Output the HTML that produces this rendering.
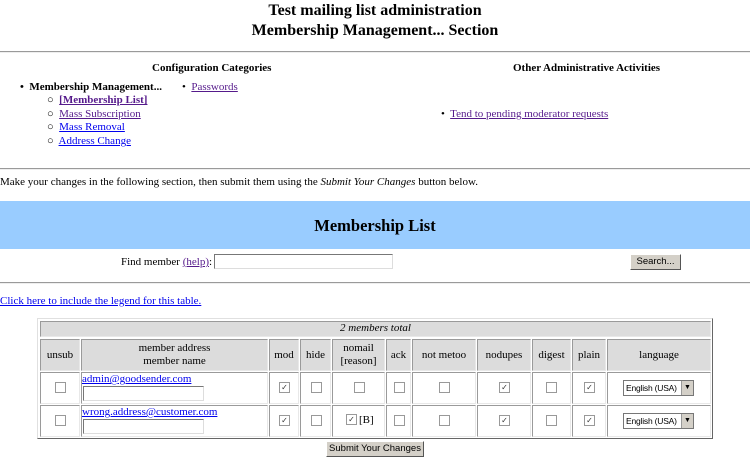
<!DOCTYPE html>
<html><head><meta charset="utf-8"><style>
body{margin:0;width:750px;height:462px;background:#fff;font-family:"Liberation Serif",serif;font-size:11px;color:#000;position:relative;overflow:hidden}
.a{position:absolute;white-space:nowrap}
a{color:#00e;text-decoration:underline}
a.v{color:#551a8b}
.hr{position:absolute;left:0;width:750px;height:0;border-top:1px solid #9a9a9a;border-bottom:1px solid #eee}
.c{position:absolute;box-sizing:border-box;border:1px solid;border-color:#9a9a9a #e8e8e8 #e8e8e8 #9a9a9a;text-align:center;line-height:13px}
.h{background:#dcdcdc}
.cb{display:inline-block;width:9px;height:9px;border:1px solid #999;background:#fff;position:absolute;font-size:8px;line-height:9px;text-align:center;font-family:"DejaVu Sans",sans-serif;color:#333}
.in{position:absolute;box-sizing:border-box;border:1px solid;border-color:#777 #ddd #ddd #777;background:#fff}
.btn{position:absolute;box-sizing:border-box;background:#d4d0c8;border:1px solid;border-color:#fff #555 #555 #fff;font-family:"Liberation Sans",sans-serif;font-size:9.5px;text-align:center;white-space:nowrap}
.sel{position:absolute;box-sizing:border-box;border:1px solid #777;background:#fff;font-family:"Liberation Sans",sans-serif;font-size:8.5px;letter-spacing:-0.2px;line-height:14px;padding-left:2px;width:71px;height:16px;white-space:nowrap;overflow:hidden}
.sel i{position:absolute;right:0;top:0;width:11px;height:14px;background:#d4d0c8;border-left:1px solid #999;font-style:normal;font-size:7px;text-align:center;letter-spacing:0}
</style></head><body>
<div class="a" style="left:0;width:750px;text-align:center;top:1px;font-size:16px;font-weight:bold;line-height:20px">Test mailing list administration<br>Membership Management... Section</div>
<div class="hr" style="top:51px"></div>
<div class="a" style="left:152px;top:62px;font-weight:bold">Configuration Categories</div>
<div class="a" style="left:513px;top:62px;font-weight:bold">Other Administrative Activities</div>
<div class="a" style="left:20px;top:81px;font-weight:bold">•&nbsp; Membership Management...</div>
<div class="a" style="left:182px;top:81px">•&nbsp; <a class="v">Passwords</a></div>
<div class="a" style="left:47px;top:94px">○&nbsp; <a class="v" style="font-weight:bold">[Membership List]</a></div>
<div class="a" style="left:47px;top:108px">○&nbsp; <a class="v">Mass Subscription</a></div>
<div class="a" style="left:47px;top:121px">○&nbsp; <a>Mass Removal</a></div>
<div class="a" style="left:47px;top:135px">○&nbsp; <a>Address Change</a></div>
<div class="a" style="left:441px;top:108px">•&nbsp; <a class="v">Tend to pending moderator requests</a></div>
<div class="hr" style="top:168px"></div>
<div class="a" style="left:0;top:176px">Make your changes in the following section, then submit them using the <i>Submit Your Changes</i> button below.</div>
<div class="a" style="left:0;top:201px;width:750px;height:48px;background:#99ccff"></div>
<div class="a" style="left:0;top:216px;width:750px;text-align:center;font-size:16.5px;font-weight:bold">Membership List</div>
<div class="a" style="left:121px;top:256px">Find member <a class="v">(help)</a>:</div>
<div class="in" style="left:214px;top:254px;width:179px;height:15px"></div>
<div class="btn" style="left:630px;top:254px;width:51px;height:16px;line-height:14px">Search...</div>
<div class="hr" style="top:282px"></div>
<div class="a" style="left:0;top:295px"><a>Click here to include the legend for this table.</a></div>

<div class="a" style="left:37px;top:318px;width:676px;height:121px;box-sizing:border-box;border:1px solid;border-color:#e0e0e0 #666 #666 #e0e0e0"></div>
<div class="c h" style="left:40px;top:321px;width:671px;height:16px;text-align:center"><i>2 members total</i></div>

<div class="c h" style="left:40px;top:339px;width:40px;height:32px;line-height:30px">unsub</div>
<div class="c h" style="left:81px;top:339px;width:187px;height:32px;padding-top:2px">member address<br>member name</div>
<div class="c h" style="left:269px;top:339px;width:30px;height:32px;line-height:30px">mod</div>
<div class="c h" style="left:300px;top:339px;width:31px;height:32px;line-height:30px">hide</div>
<div class="c h" style="left:332px;top:339px;width:53px;height:32px;padding-top:2px">nomail<br>[reason]</div>
<div class="c h" style="left:386px;top:339px;width:25px;height:32px;line-height:30px">ack</div>
<div class="c h" style="left:412px;top:339px;width:64px;height:32px;line-height:30px">not metoo</div>
<div class="c h" style="left:477px;top:339px;width:54px;height:32px;line-height:30px">nodupes</div>
<div class="c h" style="left:532px;top:339px;width:39px;height:32px;line-height:30px">digest</div>
<div class="c h" style="left:572px;top:339px;width:34px;height:32px;line-height:30px">plain</div>
<div class="c h" style="left:607px;top:339px;width:104px;height:32px;line-height:30px">language</div>

<div class="c" style="left:40px;top:372px;width:40px;height:32px"></div>
<div class="c" style="left:81px;top:372px;width:187px;height:32px"></div>
<div class="c" style="left:269px;top:372px;width:30px;height:32px"></div>
<div class="c" style="left:300px;top:372px;width:31px;height:32px"></div>
<div class="c" style="left:332px;top:372px;width:53px;height:32px"></div>
<div class="c" style="left:386px;top:372px;width:25px;height:32px"></div>
<div class="c" style="left:412px;top:372px;width:64px;height:32px"></div>
<div class="c" style="left:477px;top:372px;width:54px;height:32px"></div>
<div class="c" style="left:532px;top:372px;width:39px;height:32px"></div>
<div class="c" style="left:572px;top:372px;width:34px;height:32px"></div>
<div class="c" style="left:607px;top:372px;width:104px;height:32px"></div>
<div class="c" style="left:40px;top:405px;width:40px;height:32px"></div>
<div class="c" style="left:81px;top:405px;width:187px;height:32px"></div>
<div class="c" style="left:269px;top:405px;width:30px;height:32px"></div>
<div class="c" style="left:300px;top:405px;width:31px;height:32px"></div>
<div class="c" style="left:332px;top:405px;width:53px;height:32px"></div>
<div class="c" style="left:386px;top:405px;width:25px;height:32px"></div>
<div class="c" style="left:412px;top:405px;width:64px;height:32px"></div>
<div class="c" style="left:477px;top:405px;width:54px;height:32px"></div>
<div class="c" style="left:532px;top:405px;width:39px;height:32px"></div>
<div class="c" style="left:572px;top:405px;width:34px;height:32px"></div>
<div class="c" style="left:607px;top:405px;width:104px;height:32px"></div>

<div class="a" style="left:82px;top:373px"><a>admin@goodsender.com</a></div>
<div class="in" style="left:83px;top:386px;width:121px;height:15px"></div>
<div class="a" style="left:82px;top:406px"><a>wrong.address@customer.com</a></div>
<div class="in" style="left:83px;top:419px;width:121px;height:15px"></div>

<span class="cb" style="left:55px;top:382px"></span>
<span class="cb" style="left:279px;top:382px">✓</span>
<span class="cb" style="left:311px;top:382px"></span>
<span class="cb" style="left:354px;top:382px"></span>
<span class="cb" style="left:394px;top:382px"></span>
<span class="cb" style="left:439px;top:382px"></span>
<span class="cb" style="left:499px;top:382px">✓</span>
<span class="cb" style="left:546px;top:382px"></span>
<span class="cb" style="left:584px;top:382px">✓</span>
<div class="sel" style="left:623px;top:380px">English (USA)<i>▼</i></div>

<span class="cb" style="left:55px;top:415px"></span>
<span class="cb" style="left:279px;top:415px">✓</span>
<span class="cb" style="left:311px;top:415px"></span>
<span class="cb" style="left:346px;top:414px">✓</span>
<div class="a" style="left:359px;top:414px">[B]</div>
<span class="cb" style="left:394px;top:415px"></span>
<span class="cb" style="left:439px;top:415px"></span>
<span class="cb" style="left:499px;top:415px">✓</span>
<span class="cb" style="left:546px;top:415px"></span>
<span class="cb" style="left:584px;top:415px">✓</span>
<div class="sel" style="left:623px;top:413px">English (USA)<i>▼</i></div>

<div class="btn" style="left:326px;top:441px;width:98px;height:16px;line-height:14px">Submit Your Changes</div>
</body></html>
